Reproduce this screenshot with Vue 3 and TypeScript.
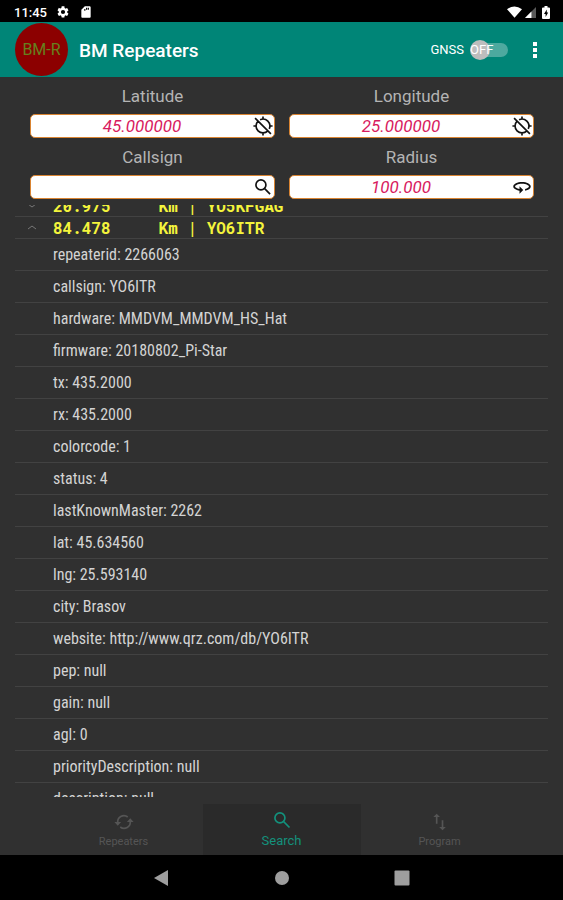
<script setup lang="ts">
import { onMounted, ref } from 'vue'

interface Detail {
  key: string
  value: string
}

interface Group {
  distance: string
  callsign: string
  open: boolean
}

const latitude = ref('45.000000')
const longitude = ref('25.000000')
const callsign = ref('')
const radius = ref('100.000')
const gnss = ref(false)
const activeTab = ref('Search')
const list = ref<HTMLElement | null>(null)

const groups: Group[] = [
  { distance: '20.975', callsign: 'YO5KFGAG', open: false },
  { distance: '84.478', callsign: 'YO6ITR', open: true },
]

const groupTitle = (g: Group): string => `${g.distance.padEnd(11)}Km | ${g.callsign}`

const details: Detail[] = [
  { key: 'repeaterid', value: '2266063' },
  { key: 'callsign', value: 'YO6ITR' },
  { key: 'hardware', value: 'MMDVM_MMDVM_HS_Hat' },
  { key: 'firmware', value: '20180802_Pi-Star' },
  { key: 'tx', value: '435.2000' },
  { key: 'rx', value: '435.2000' },
  { key: 'colorcode', value: '1' },
  { key: 'status', value: '4' },
  { key: 'lastKnownMaster', value: '2262' },
  { key: 'lat', value: '45.634560' },
  { key: 'lng', value: '25.593140' },
  { key: 'city', value: 'Brasov' },
  { key: 'website', value: 'http://www.qrz.com/db/YO6ITR' },
  { key: 'pep', value: 'null' },
  { key: 'gain', value: 'null' },
  { key: 'agl', value: '0' },
  { key: 'priorityDescription', value: 'null' },
  { key: 'description', value: 'null' },
]

onMounted(() => {
  if (list.value) list.value.scrollTop = 10
})
</script>

<template>
  <div class="screen">
    <div class="status">
      <div class="status-group">
        <span class="clock">11:45</span>
        <svg class="gear" viewBox="0 0 24 24"><path d="M19.14 12.94c.04-.3.06-.61.06-.94s-.02-.64-.07-.94l2.03-1.58a.5.5 0 0 0 .12-.61l-1.92-3.32a.5.5 0 0 0-.59-.22l-2.39.96a7 7 0 0 0-1.62-.94l-.36-2.54A.5.5 0 0 0 13.92 2h-3.84a.5.5 0 0 0-.47.41l-.36 2.54c-.59.24-1.13.57-1.62.94l-2.39-.96a.5.5 0 0 0-.59.22L2.74 8.87a.5.5 0 0 0 .12.61l2.03 1.58c-.05.3-.09.63-.09.94s.02.64.07.94l-2.03 1.58a.5.5 0 0 0-.12.61l1.92 3.32c.12.22.37.29.59.22l2.39-.96c.5.38 1.03.7 1.62.94l.36 2.54c.05.24.24.41.48.41h3.84c.24 0 .44-.17.47-.41l.36-2.54a7 7 0 0 0 1.62-.94l2.39.96c.22.08.47 0 .59-.22l1.92-3.32a.5.5 0 0 0-.12-.61l-2.01-1.58zM12 15.6a3.6 3.6 0 1 1 0-7.2 3.6 3.6 0 0 1 0 7.2z" /></svg>
        <svg class="card" viewBox="0 0 24 24"><path fill-rule="evenodd" d="M18 2h-8L4 8v12c0 1.100.9 2 2 2h12c1.100 0 2-.9 2-2V4c0-1.100-.9-2-2-2zM9 7h2v3H9zM12 4.500h2V8h-2zM15 4.500h2V8h-2z" /></svg>
      </div>
      <div class="status-group right">
        <svg class="wifi" viewBox="0 0 16 12"><path d="M8 12 0 3Q8-3 16 3z" /></svg>
        <svg class="signal" viewBox="0 0 12 12"><path opacity=".35" d="M0 12 12 0v12z" /><path d="M0 12 7 5v7z" /></svg>
        <svg class="battery" viewBox="0 0 8 13"><path fill-rule="evenodd" d="M2.500 0h3v1.500H7q1 0 1 1V12q0 1-1 1H1q-1 0-1-1V2.500q0-1 1-1h1.500zM4.800 3.500 2 8h1.600v3L6.200 6.500H4.800z" /></svg>
      </div>
    </div>

    <header class="appbar">
      <div class="logo">BM-R</div>
      <h1>BM Repeaters</h1>
      <label class="gnss">
        <span>GNSS</span>
        <span class="switch">
          <input v-model="gnss" type="checkbox" />
          <span class="state">{{ gnss ? 'ON' : 'OFF' }}</span>
        </span>
      </label>
      <button class="more" type="button" aria-label="More options">
        <svg viewBox="0 0 4 16"><path d="M0 0h4v4H0zM0 6h4v4H0zM0 12h4v4H0z" /></svg>
      </button>
    </header>

    <form class="filters" @submit.prevent>
      <div class="field">
        <label for="lat">Latitude</label>
        <div class="box">
          <input id="lat" v-model="latitude" type="text" />
          <button type="button" aria-label="Location off">
            <svg viewBox="0 0 24 24" class="line"><path d="M8.500 4.500A8.300 8.300 0 0 1 19.500 15.500M17.900 17.900A8.300 8.300 0 0 1 6.100 6.100M12 .5v4M12 19.500v4M.5 12h4M19.500 12h4M2.500 2.500 21.500 21.500" /></svg>
          </button>
        </div>
      </div>
      <div class="field">
        <label for="lng">Longitude</label>
        <div class="box">
          <input id="lng" v-model="longitude" type="text" />
          <button type="button" aria-label="Location off">
            <svg viewBox="0 0 24 24" class="line"><path d="M8.500 4.500A8.300 8.300 0 0 1 19.500 15.500M17.900 17.900A8.300 8.300 0 0 1 6.100 6.100M12 .5v4M12 19.500v4M.5 12h4M19.500 12h4M2.500 2.500 21.500 21.500" /></svg>
          </button>
        </div>
      </div>
      <div class="field">
        <label for="call">Callsign</label>
        <div class="box">
          <input id="call" v-model="callsign" type="text" />
          <button type="button" aria-label="Search">
            <svg viewBox="0 0 24 24" class="line"><circle cx="9.500" cy="9.500" r="6" /><path d="m14 14 6.500 6.500" /></svg>
          </button>
        </div>
      </div>
      <div class="field">
        <label for="radius">Radius</label>
        <div class="box">
          <input id="radius" v-model="radius" type="text" />
          <button type="button" aria-label="Set radius">
            <svg viewBox="0 0 24 24"><path d="M12 6C6.500 6 1.500 8.200 1.500 11.500c0 2.400 3.200 4.200 7.500 5V20l4.500-4.500L9 11v3.400c-3.400-.6-5.300-1.900-5.300-2.900 0-1.300 3.200-3.300 8.300-3.300s8.300 2 8.300 3.300c0 1-1.700 2.200-4.600 2.900v2.200c4-.8 6.800-2.600 6.800-5.100C22.500 8.200 17.500 6 12 6z" /></svg>
          </button>
        </div>
      </div>
    </form>

    <main ref="list" class="list">
      <button v-for="g in groups" :key="g.callsign" class="group" type="button" :aria-expanded="g.open">
        <svg viewBox="0 0 10 5"><path :d="g.open ? 'm1 4 4-3 4 3' : 'm1 1 4 3 4-3'" /></svg>
        <span>{{ groupTitle(g) }}</span>
      </button>
      <ul>
        <li v-for="d in details" :key="d.key">{{ d.key }}: {{ d.value }}</li>
      </ul>
    </main>

    <nav class="tabs">
      <button type="button" :class="{ active: activeTab === 'Repeaters' }" @click="activeTab = 'Repeaters'">
        <svg viewBox="0 0 24 24"><path class="stroke" d="M4.500 13a7.500 7.500 0 0 1 12-7M19.500 11a7.500 7.500 0 0 1-12 7" /><path d="M.5 12h8l-4 4.500zM15.500 12h8l-4-4.500z" /></svg>
        <span>Repeaters</span>
      </button>
      <button type="button" :class="{ active: activeTab === 'Search' }" @click="activeTab = 'Search'">
        <svg viewBox="0 0 24 24"><circle class="stroke" cx="9.500" cy="9.500" r="6" /><path class="stroke" d="m14 14 7 7" /></svg>
        <span>Search</span>
      </button>
      <button type="button" :class="{ active: activeTab === 'Program' }" @click="activeTab = 'Program'">
        <svg viewBox="0 0 24 24"><path d="M8 2 4 6h3v8h2V6h3zM16 18V10h-2v8h-3L15 22l4-4z" /></svg>
        <span>Program</span>
      </button>
    </nav>

    <div class="system">
      <button type="button" aria-label="Back"><svg viewBox="0 0 16 16"><path d="M0 8 14 0v16z" /></svg></button>
      <button type="button" aria-label="Home"><svg viewBox="0 0 16 16"><circle cx="8" cy="8" r="7" /></svg></button>
      <button type="button" aria-label="Recent apps"><svg viewBox="0 0 16 16"><rect width="15" height="15" x=".5" y=".5" rx="1" /></svg></button>
    </div>
  </div>
</template>

<style>
body {
  margin: 0;
  background: #303030;
}
</style>

<style scoped>
.screen {
  display: flex;
  flex-direction: column;
  height: 100vh;
  background: #303030;
  color: #d4d4d4;
  font-family: Roboto, "Liberation Sans", sans-serif;
}
button {
  padding: 0;
  border: 0;
  background: none;
  color: inherit;
  font: inherit;
}
svg {
  display: block;
  fill: currentColor;
}
.status {
  display: flex;
  flex: none;
  align-items: center;
  justify-content: space-between;
  height: 22px;
  padding: 2px 13px 0 14px;
  box-sizing: border-box;
  background: #000;
  color: #fff;
}
.status-group {
  display: flex;
  align-items: center;
  gap: 9px;
}
.status-group.right {
  gap: 3px;
}
.clock {
  font-size: 13px;
  font-weight: 500;
}
.gear,
.card {
  width: 14px;
  height: 14px;
}
.wifi {
  width: 15px;
  height: 12px;
}
.signal {
  width: 11px;
  height: 11px;
}
.battery {
  width: 8px;
  height: 13px;
  margin-left: 3px;
}
.appbar {
  display: flex;
  flex: none;
  align-items: center;
  height: 55px;
  padding: 0 16px 0 15px;
  box-sizing: border-box;
  background: #008577;
  color: #fff;
}
.logo {
  flex: none;
  width: 53px;
  height: 53px;
  border-radius: 50%;
  background: #8c0000;
  color: #66801e;
  font-size: 16px;
  line-height: 53px;
  text-align: center;
}
h1 {
  flex: 1;
  margin: 2px 0 0 11px;
  font-size: 19px;
  font-weight: 500;
  line-height: 24px;
}
.gnss {
  display: flex;
  align-items: center;
  gap: 6px;
  font-size: 13px;
  line-height: 16px;
}
.switch {
  position: relative;
  width: 38px;
  height: 20px;
}
.switch input {
  appearance: none;
  display: block;
  width: 35px;
  height: 14px;
  margin: 3px 0 3px 3px;
  border-radius: 7px;
  background: #4da99f;
}
.switch input::before {
  content: "";
  position: absolute;
  top: 0;
  left: 0;
  width: 20px;
  height: 20px;
  border-radius: 50%;
  background: #bdbdbd;
}
.switch input:checked::before {
  left: 18px;
}
.state {
  position: absolute;
  top: 2px;
  left: 0;
}
.more {
  display: flex;
  justify-content: center;
  width: 24px;
  margin-left: 15px;
}
.more svg {
  width: 4px;
  height: 16px;
}
.filters {
  display: grid;
  flex: none;
  grid-template-columns: 1fr 1fr;
  gap: 9px 14px;
  padding: 9px 29px 6px 30px;
}
.field label {
  display: block;
  margin-bottom: 8px;
  color: #b4b4b4;
  font-size: 17px;
  line-height: 20px;
  text-align: center;
}
.box {
  display: flex;
  align-items: center;
  height: 24px;
  padding-right: 1px;
  box-sizing: border-box;
  border: 1px solid #d98432;
  border-radius: 5px;
  background: #fff;
  color: #111;
}
.box input {
  flex: 1;
  min-width: 0;
  height: 22px;
  padding: 0;
  border: 0;
  outline: 0;
  background: none;
  color: #d81b60;
  font: italic 17px/22px Roboto, "Liberation Sans", sans-serif;
  text-align: center;
}
.box svg {
  width: 20px;
  height: 20px;
}
.line {
  fill: none;
  stroke: currentColor;
  stroke-width: 2;
}
.list {
  flex: 1;
  min-height: 0;
  padding: 0 15px;
  overflow-y: auto;
  scrollbar-width: none;
}
.group {
  display: flex;
  align-items: center;
  width: 100%;
  height: 22px;
  padding-left: 12px;
  box-sizing: border-box;
  border-bottom: 1px solid #424242;
  color: #f4f43c;
  font: bold 16px/19px "Roboto Mono", "DejaVu Sans Mono", monospace;
  white-space: pre;
}
.group svg {
  flex: none;
  width: 10px;
  height: 5px;
  margin-right: 16px;
  fill: none;
  stroke: #777;
}
ul {
  margin: 0;
  padding: 0;
  list-style: none;
}
li {
  height: 32px;
  padding-left: 38px;
  box-sizing: border-box;
  border-bottom: 1px solid #424242;
  font: 16px/32px "Roboto Condensed", Roboto, sans-serif;
}
.tabs {
  display: flex;
  flex: none;
  justify-content: center;
  height: 51px;
  margin-top: 7px;
  color: #555;
}
.tabs button {
  display: flex;
  flex: 0 1 158px;
  flex-direction: column;
  align-items: center;
  padding-top: 8px;
  font-size: 11px;
  line-height: 14px;
}
.tabs svg {
  width: 20px;
  height: 20px;
  margin-bottom: 3px;
}
.tabs .stroke {
  fill: none;
  stroke: currentColor;
  stroke-width: 2;
}
.tabs .active {
  padding-top: 6px;
  background: #2a2a2a;
  color: #13917c;
  font-size: 13px;
  line-height: 16px;
}
.system {
  display: flex;
  flex: none;
  align-items: center;
  justify-content: center;
  gap: 104px;
  height: 45px;
  background: #000;
  color: #9e9e9e;
}
.system svg {
  width: 16px;
  height: 16px;
}
</style>
